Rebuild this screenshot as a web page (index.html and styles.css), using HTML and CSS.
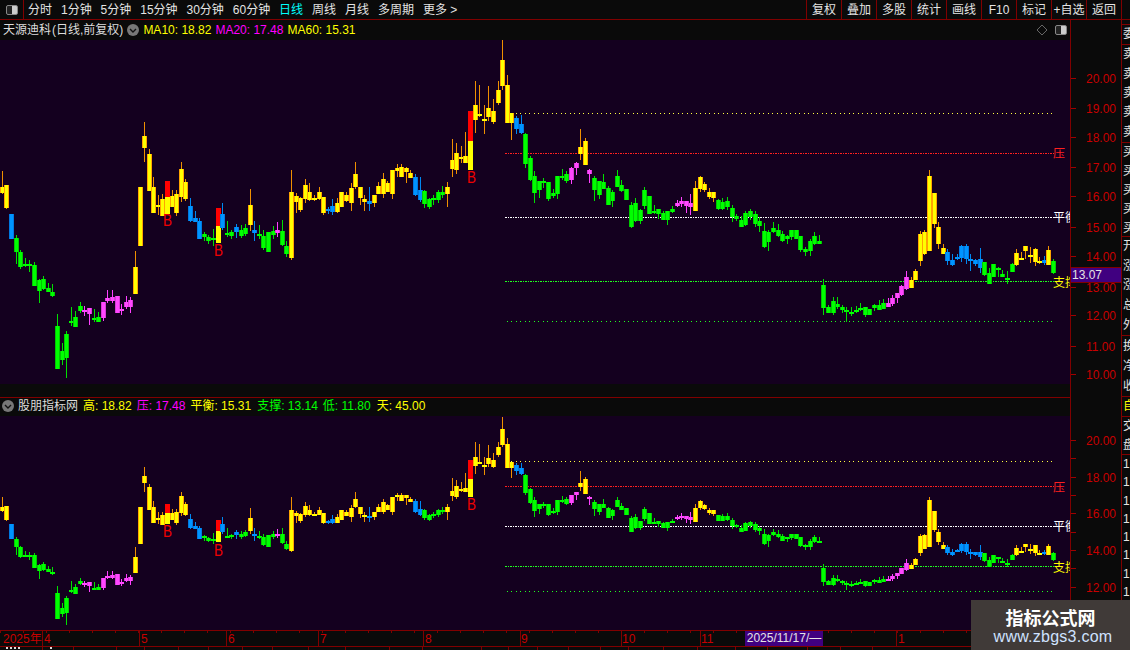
FILE: index.html
```html
<!DOCTYPE html>
<html lang="zh-CN">
<head>
<meta charset="utf-8">
<title>天源迪科 日线</title>
<link rel="stylesheet" href="styles.css">
</head>
<body>
<div class="app">
  <header class="toolbar">
    <div class="layout-btn"><span class="split-icon"></span></div>
    <nav class="periods">
      <span>分时</span><span>1分钟</span><span>5分钟</span><span>15分钟</span><span>30分钟</span><span>60分钟</span>
      <span class="active">日线</span><span>周线</span><span>月线</span><span>多周期</span><span>更多 &gt;</span>
    </nav>
    <nav class="tools">
      <span>复权</span><span>叠加</span><span>多股</span><span>统计</span><span>画线</span><span>F10</span><span>标记</span><span>+自选</span><span>返回</span>
    </nav>
    <div class="tools-end"></div>
  </header>
  <div class="workspace">
    <div class="charts">
      <div class="legend legend-top">
        <span class="title">天源迪科 (日线,前复权)</span>
        <span class="round-btn"><svg viewBox="0 0 12 12"><path d="M3 5l3 3 3-3" fill="none" stroke="#111" stroke-width="1.4"/></svg></span>
        <span class="yellow">MA10: 18.82</span>
        <span class="magenta">MA20: 17.48</span>
        <span class="yellow">MA60: 15.31</span>
        <span class="legend-right">
          <svg class="diamond" viewBox="0 0 12 12"><path d="M6 1l5 5-5 5-5-5z" fill="none" stroke="#666"/></svg>
          <span class="split-icon"></span>
        </span>
      </div>
      <div class="pane pane-top" id="paneTop">
        <svg class="plot" id="plotTop" width="1070" height="344" viewBox="0 40 1070 344"></svg>
        <div class="axis" id="axisTop"><div class="price-tag">13.07</div></div>
      </div>
      <div class="pane-gap"></div>
      <div class="legend legend-bottom">
        <span class="round-btn"><svg viewBox="0 0 12 12"><path d="M3 5l3 3 3-3" fill="none" stroke="#111" stroke-width="1.4"/></svg></span>
        <span class="title">股朋指标网</span>
        <span class="yellow">高: 18.82</span>
        <span class="magenta">压: 17.48</span>
        <span class="yellow">平衡: 15.31</span>
        <span class="green wide">支撑: 13.14</span>
        <span class="green">低: 11.80</span>
        <span class="yellow wide">天: 45.00</span>
      </div>
      <div class="pane pane-bottom">
        <svg class="plot" id="plotBottom" width="1070" height="214" viewBox="0 416 1070 214"></svg>
        <div class="axis" id="axisBottom"></div>
      </div>
      <div class="time-axis" id="timeAxis"></div>
      <div class="strip" id="strip"></div>
    </div>
    <aside class="side">
      <div class="side-block s0"></div>
      <div class="side-block s1"><span>委</span></div>
      <div class="side-block s2"><span>卖</span><span>卖</span><span>卖</span><span>卖</span><span>卖</span></div>
      <div class="side-block s3"><span>买</span><span>买</span><span>买</span><span>买</span><span>买</span></div>
      <div class="side-block s4"><span>开</span><span>涨</span><span>涨</span><span>总</span><span>外</span></div>
      <div class="side-block s5"><span>换</span><span>净</span><span>收</span></div>
      <div class="side-block s6"><span class="yellow">自</span></div>
      <div class="side-block s7"><span>交</span><span>盘</span></div>
      <div class="side-block s8"><span>1</span><span>1</span><span>1</span><span>1</span><span>1</span><span>1</span><span>1</span><span>1</span><span>1</span></div>
    </aside>
  </div>
  <div class="watermark">
    <div class="wm-title">指标公式网</div>
    <div class="wm-url">www.zbgs3.com</div>
  </div>
</div>
<script src="chart.js"></script>
</body>
</html>
```
FILE: styles.css
```css
* { box-sizing: border-box; }
html, body { margin: 0; padding: 0; background: #0a0a0a; overflow: hidden; }
body { width: 1130px; height: 650px; font: 12px/1 "Liberation Sans", "Noto Sans CJK SC", sans-serif; color: #e0e0e0; }
.app { position: relative; width: 1130px; height: 650px; overflow: hidden; display: flex; flex-direction: column; }

.toolbar { height: 20px; flex: none; display: flex; border-bottom: 1px solid #800000; background: #0a0a0a; }
.layout-btn { width: 24px; border-right: 1px solid #800000; display: flex; align-items: center; justify-content: center; }
.split-icon { display: block; width: 12px; height: 10px; border: 1px solid #888; border-radius: 2px; background: linear-gradient(90deg, #222 0 50%, #ccc 50% 100%); }
.periods { display: flex; gap: 8.95px; padding-left: 4px; align-items: center; flex: 1; }
.periods span { white-space: nowrap; }
.tools { display: flex; height: 19px; }
.tools span { width: 35px; display: flex; align-items: center; justify-content: center; border-left: 1px solid #800000; white-space: nowrap; }
.tools-end { width: 9px; border-left: 1px solid #800000; }
.periods span, .tools span { color: #e4e4e4; }
.periods span.active { color: #00ffff; }

.workspace { flex: 1; display: flex; min-height: 0; }
.charts { width: 1121px; flex: none; display: flex; flex-direction: column; }
.legend { display: flex; align-items: center; flex: none; background: #0a0a0a; white-space: nowrap; border-right: 1px solid #800000; }
.legend-top { height: 20px; width: 1071px; padding-left: 3px; gap: 4px; }
.legend-top .title { word-spacing: -2.3px; }
.legend-bottom { width: 1071px; padding: 0 0 2px 2px; gap: 5px; border-top: 1px solid #800000; height: 19px; }
.legend-bottom .round-btn { margin-right: -1px; }
.wide { margin-left: 1px; }
.title { color: #dcdcdc; }
.yellow { color: #ffff00; }
.magenta { color: #ff00ff; }
.green { color: #00ff00; }
.round-btn { width: 12px; height: 12px; border-radius: 50%; background: #777; display: inline-block; flex: none; }
.round-btn svg { display: block; width: 12px; height: 12px; }
.legend-right { margin-left: auto; margin-right: 3px; display: flex; align-items: center; gap: 7px; }
.diamond { width: 12px; height: 12px; }

.pane { display: flex; flex: none; }
.pane-top { height: 344px; }
.pane-bottom { height: 214px; }
.pane-gap { height: 13px; width: 1071px; flex: none; border-right: 1px solid #800000; }
.plot { display: block; flex: none; background: #14001f; }
.plot text { font-family: "Liberation Sans", "Noto Sans CJK SC", sans-serif; }
.axis { position: relative; width: 51px; flex: none; border-left: 1px solid #800000; background: #0a0a0a; }
.tick { position: absolute; left: 0; width: 5px; height: 1px; background: #a00000; }
.axis-label { position: absolute; left: 15px; color: #c80000; font-size: 12px; line-height: 14px; height: 14px; }
.price-tag { position: absolute; z-index: 2; left: 0; top: 227px; width: 50px; height: 16px; background: #400080; border-top: 1px solid #800000; border-bottom: 1px solid #800000; color: #e4e4e4; line-height: 14px; padding-left: 1px; }

.time-axis { position: relative; flex: none; height: 17px; width: 1121px; border-top: 1px solid #800000; border-bottom: 1px solid #800000; background-color: #0a0a0a; background-image: repeating-linear-gradient(90deg, #800000 0 1px, transparent 1px 23px); background-size: 100% 2px; background-repeat: no-repeat; }
.time-divider { position: absolute; top: 0; bottom: 0; width: 1px; background: #800000; }
.time-label { position: absolute; top: 1px; color: #c80000; line-height: 14px; white-space: nowrap; }
.time-cursor { position: absolute; top: 0; height: 15px; left: 745px; width: 78px; background: #400080; color: #e4e4e4; line-height: 15px; text-align: center; white-space: nowrap; }
.strip { position: relative; flex: 1; overflow: hidden; }
.strip i { position: absolute; top: 0; bottom: 0; width: 1px; background: #800000; }
.strip b { position: absolute; top: 0; height: 2px; background: repeating-linear-gradient(90deg, #ddd 0 2px, transparent 2px 4px); }

.side { width: 9px; flex: none; display: flex; flex-direction: column; border-left: 1px solid #800000; overflow: hidden; }
.side-block { display: flex; flex-direction: column; flex: none; border-bottom: 1px solid #800000; overflow: hidden; padding-left: 1px; }
.side-block span { display: block; width: 14px; line-height: 19px; height: 19px; color: #e4e4e4; flex: none; }
.side-block span.yellow { color: #ffff00; }
.s0 { height: 5px; }
.s1 { height: 20px; justify-content: center; }
.s2 { height: 98px; justify-content: space-around; }
.s3 { height: 94px; justify-content: space-around; }
.s4 { height: 99px; justify-content: space-around; }
.s5 { height: 61px; justify-content: space-around; }
.s6 { height: 20px; }
.s7 { height: 38px; }
.s8 { flex: 1; border-bottom: 0; }
.s8 span { height: 18.3px; line-height: 18.3px; }

.watermark { position: absolute; left: 971px; top: 600px; width: 159px; height: 50px; background: #403a38; text-align: center; padding-top: 6px; }
.wm-title { font: bold 18px/22px "Noto Sans CJK SC", sans-serif; color: #fff; }
.wm-url { font: 16px/18px "Liberation Sans", sans-serif; color: #cfe2ff; letter-spacing: 0.25px; padding-left: 5px; }
```
FILE: chart.js
```javascript
// Daily candles, given as pixel rows of the upper pane: [type, high, bodyTop, bodyBottom, low]
var C = [
['y',171,187,193,194],['y',185,185,208,209],['b',214,214,239,239],['g',235,238,252,264],['g',250,252,267,269],['g',258,264,266,267],['g',260,264,266,272],['g',262,265,286,286],['g',279,280,291,303],['g',276,279,289,290],
['g',283,288,292,292],['g',284,292,296,297],['g',314,326,369,369],['g',343,351,360,365],['g',331,334,358,378],['g',307,321,322,326],['g',311,317,327,327],['g',302,306,311,313],['m',306,310,312,316],['m',308,308,314,325],
['g',309,318,320,322],['g',312,317,322,322],['m',302,302,318,321],['m',290,298,301,303],['m',290,297,301,303],['m',296,296,313,313],['m',304,309,311,315],['m',296,302,307,309],['m',297,300,307,313],['y',251,267,294,294],
['y',187,187,246,246],['y',122,136,148,162],['y',149,154,191,191],['y',177,187,213,213],['y',195,205,207,215],['y',194,199,216,216],['r',181,197,214,214],['y',190,196,207,207],['y',190,194,213,216],['y',162,169,197,202],
['y',179,182,199,201],['b',198,206,221,222],['b',211,218,222,222],['b',218,221,239,239],['g',232,234,237,241],['g',235,237,241,244],['g',229,238,240,246],['r',208,226,243,243],['b',203,214,228,230],['g',221,233,234,237],
['g',230,232,236,239],['b',224,227,232,238],['g',225,230,236,238],['g',224,228,234,236],['y',189,205,225,231],['b',221,230,233,241],['g',225,234,235,239],['g',230,236,248,250],['g',232,232,252,252],['g',226,231,235,239],
['m',222,230,233,237],['g',220,231,245,246],['g',241,246,254,257],['y',170,192,258,260],['y',193,196,202,213],['y',197,198,210,212],['y',179,185,199,203],['y',183,192,200,201],['y',195,198,200,201],['y',187,192,199,200],
['y',197,197,213,215],['b',207,209,211,214],['b',199,206,212,215],['y',198,203,212,213],['y',192,192,207,207],['y',192,195,201,202],['y',183,188,203,211],['y',162,174,187,189],['y',187,187,198,205],['y',195,199,202,211],
['b',187,201,204,211],['y',195,195,203,207],['y',182,186,194,194],['y',173,179,194,198],['y',181,183,192,192],['y',170,170,194,199],['y',164,168,171,177],['y',164,167,177,177],['y',167,168,172,183],['y',170,173,178,178],
['b',174,177,195,196],['b',177,190,200,202],['g',190,191,204,208],['g',198,199,207,209],['g',195,198,199,205],['g',190,192,200,203],['g',186,192,195,198],['y',182,187,194,207],['y',139,160,169,177],['y',143,153,170,174],
['y',146,157,158,163],['y',132,156,163,163],['r',111,141,170,170],['y',81,105,120,133],['y',85,114,115,117],['y',105,119,121,134],['y',86,108,117,121],['y',99,111,122,124],['y',81,90,103,105],['y',40,60,86,90],
['y',75,85,123,123],['y',113,113,123,140],['b',116,118,129,134],['b',115,124,133,134],['g',133,134,164,168],['g',156,158,180,181],['g',171,176,193,203],['g',181,181,190,198],['g',178,181,183,188],['g',182,182,199,201],
['g',189,193,196,198],['g',176,176,194,199],['g',169,176,177,180],['g',171,174,181,183],['m',167,168,180,184],['m',162,163,168,175],['y',129,147,154,160],['y',138,141,165,165],['m',169,170,174,183],['g',176,178,190,201],
['g',181,181,195,199],['g',174,182,189,189],['g',186,188,205,205],['g',190,192,201,207],['g',170,176,187,187],['g',180,185,191,192],['g',189,189,200,200],['g',202,205,227,228],['g',198,203,221,222],['g',209,210,221,224],
['g',187,190,206,209],['g',196,196,214,214],['g',205,211,213,214],['g',209,209,214,219],['g',211,213,220,220],['g',211,211,220,225],['g',206,209,212,213],['m',200,203,206,207],['m',197,201,204,207],['m',201,201,206,213],
['m',194,203,207,215],['y',181,188,211,211],['y',176,177,189,192],['y',182,184,190,192],['y',188,192,197,199],['y',192,192,198,202],['g',199,200,209,210],['g',198,202,209,210],['g',197,201,207,210],['g',205,208,217,222],
['g',214,216,219,221],['g',216,220,227,227],['g',211,213,225,226],['g',209,211,217,220],['g',211,214,224,227],['g',217,221,226,232],['g',223,231,247,248],['g',230,232,242,251],['g',222,228,232,233],['g',224,230,236,237],
['g',231,234,241,242],['g',235,236,239,244],['g',230,230,237,240],['g',230,230,239,239],['g',236,236,250,252],['g',247,249,252,256],['g',239,241,251,256],['g',232,236,244,245],['g',235,241,244,244],['g',279,285,308,315],
['g',305,307,313,313],['g',297,301,313,315],['g',297,304,307,309],['g',305,307,310,313],['g',307,310,312,322],['g',307,312,314,316],['g',306,310,311,313],['g',303,308,310,311],['g',307,307,315,317],['g',309,309,315,315],
['g',304,305,308,311],['g',300,305,310,310],['g',299,303,309,309],['m',298,303,307,307],['m',295,298,304,306],['m',293,293,298,303],['m',285,286,295,296],['m',271,277,289,290],['y',277,280,288,288],['y',269,271,280,280],
['y',231,234,261,266],['y',230,232,254,255],['y',170,176,251,251],['y',193,193,224,228],['y',222,227,244,249],['y',244,248,254,254],['b',249,252,261,265],['b',254,260,265,266],['b',254,257,259,260],['b',245,246,258,262],
['b',244,246,259,264],['b',254,259,260,271],['b',259,260,264,266],['b',248,259,268,273],['g',262,262,275,276],['g',268,273,284,284],['g',264,264,277,277],['g',267,268,270,277],['g',270,274,277,277],['g',271,278,279,284],
['g',263,264,272,272],['y',249,253,265,266],['y',252,258,260,260],['y',246,246,251,259],['y',247,255,256,263],['y',248,249,262,266],['y',257,261,262,264],['b',256,260,263,265],['y',246,250,265,265],['g',259,261,273,274]
];

var COL = {
  y: { wick: '#f09000', edge: '#ffa500', core: '#ffff00' },
  g: { wick: '#00e000', edge: '#00c800', core: '#00ff00' },
  b: { wick: '#0088f0', edge: '#0078e0', core: '#0094ff' },
  m: { wick: '#ff40ff', edge: '#d838d8', core: '#ff48ff' }
};
var NS = 'http://www.w3.org/2000/svg';
function el(parent, tag, attrs, text) {
  var n = document.createElementNS(NS, tag);
  for (var k in attrs) n.setAttribute(k, attrs[k]);
  if (text) n.textContent = text;
  parent.appendChild(n);
  return n;
}
function rect(p, x, y, w, h, fill) { el(p, 'rect', { x: x, y: y, width: w, height: h, fill: fill, 'shape-rendering': 'crispEdges' }); }
function col(i) { return Math.floor(2.33 + i * 4.59); }

function drawPane(svg, map, rows, bLabels, tags) {
  var lines = [
    { c: '#ffff40', sparse: true },
    { c: '#ff2020' },
    { c: '#ffffff' },
    { c: '#20ff20' },
    { c: '#20ff20', sparse: true }
  ];
  lines.forEach(function (l, n) {
    var y = rows[n];
    if (l.sparse) {
      for (var x0 = 507; x0 < 1055; x0 += 4.5) rect(svg, Math.floor(x0), y, 1, 1, l.c);
    } else {
      // dotted line with a denser double dot every other step
      for (var x = 505; x < 1055; x += 5) {
        rect(svg, x, y, 2, 1, l.c);
        rect(svg, x + 3, y, 1, 1, l.c);
      }
    }
  });
  C.forEach(function (c, i) {
    var x = col(i), t = c[0];
    var hi = Math.round(map(c[1])), top = Math.round(map(c[2])), bot = Math.round(map(c[3])), lo = Math.round(map(c[4]));
    if (bot - top < 2) bot = top + 2;
    if (t === 'r') {
      var mid = Math.round(map(c[2]));
      top = Math.round(map(c[1]));
      rect(svg, x - 2, top, 5, mid - top, '#ff0000');
      rect(svg, x - 2, mid, 5, bot - mid, '#ffff00');
      return;
    }
    var s = COL[t];
    if (lo > hi) rect(svg, x, hi, 1, Math.max(lo, bot) - hi, s.wick);
    rect(svg, x - 2, top, 5, bot - top, s.edge);
    if (bot - top > 2) rect(svg, x - 1, top, 3, bot - top, s.core);
    else rect(svg, x - 2, top, 5, bot - top, s.core);
  });
  bLabels.forEach(function (b) {
    el(svg, 'text', { x: b[0], y: b[1], fill: '#f00000', 'font-size': 16, textLength: 9, lengthAdjust: 'spacingAndGlyphs' }, 'B');
  });
  tags.forEach(function (l) {
    el(svg, 'text', { x: l[0], y: l[1] + 5, fill: l[2], 'font-size': 12 }, l[3]);
  });
}

drawPane(document.getElementById('plotTop'), function (y) { return y; }, [113, 153, 217, 281, 321],
  [[163, 226], [214, 256], [467, 183]],
  [[1053, 153, '#ff2020', '压'], [1053, 217, '#ffffff', '平衡'], [1053, 282, '#ffff00', '支撑']]);
drawPane(document.getElementById('plotBottom'), function (y) { return 440 + (y - 78) * 0.6166; }, [461, 486, 526, 566, 591],
  [[163, 537], [214, 556], [467, 510]],
  [[1053, 487, '#ff2020', '压'], [1053, 526, '#ffffff', '平衡'], [1053, 567, '#ffff00', '支撑']]);

function axis(id, originY, rows) {
  var a = document.getElementById(id);
  rows.forEach(function (r) {
    var y = r[0] - originY;
    var t = document.createElement('div');
    t.className = 'tick';
    t.style.top = y + 'px';
    a.appendChild(t);
    if (r[1]) {
      var l = document.createElement('div');
      l.className = 'axis-label';
      l.style.top = (y - 6) + 'px';
      l.textContent = r[1];
      a.appendChild(l);
    }
  });
}
axis('axisTop', 40, [[78,'20.00'],[108,'19.00'],[137,'18.00'],[167,'17.00'],[196,'16.00'],[227,'15.00'],[256,'14.00'],[287,'13.00'],[315,'12.00'],[346,'11.00'],[374,'10.00']]);
axis('axisBottom', 416, [[440,'20.00'],[458,''],[477,'18.00'],[495,''],[513,'16.00'],[532,''],[550,'14.00'],[568,''],[587,'12.00'],[605,'']]);

var ta = document.getElementById('timeAxis');
[[3,'2025年',0],[44,'4',42],[141,'5',139],[228,'6',226],[320,'7',318],[425,'8',423],[521,'9',520],[622,'10',621],[701,'11',700],[898,'1',896]].forEach(function (m) {
  if (m[2]) {
    var d = document.createElement('div');
    d.className = 'time-divider';
    d.style.left = m[2] + 'px';
    ta.appendChild(d);
  }
  var s = document.createElement('span');
  s.className = 'time-label';
  s.style.left = m[0] + 'px';
  s.textContent = m[1];
  ta.appendChild(s);
});
var cur = document.createElement('div');
cur.className = 'time-cursor';
cur.textContent = '2025/11/17/—';
ta.appendChild(cur);

var st = document.getElementById('strip');
[42,73,116,144,178,208,242,272,308,345,389,422,481,508,537,568,600,628,663,697,735,767,807,840,872].forEach(function (x) {
  var i = document.createElement('i');
  i.style.left = x + 'px';
  st.appendChild(i);
});
[[6,16],[50,3]].forEach(function (b) {
  var n = document.createElement('b');
  n.style.left = b[0] + 'px';
  n.style.width = b[1] + 'px';
  st.appendChild(n);
});
```
